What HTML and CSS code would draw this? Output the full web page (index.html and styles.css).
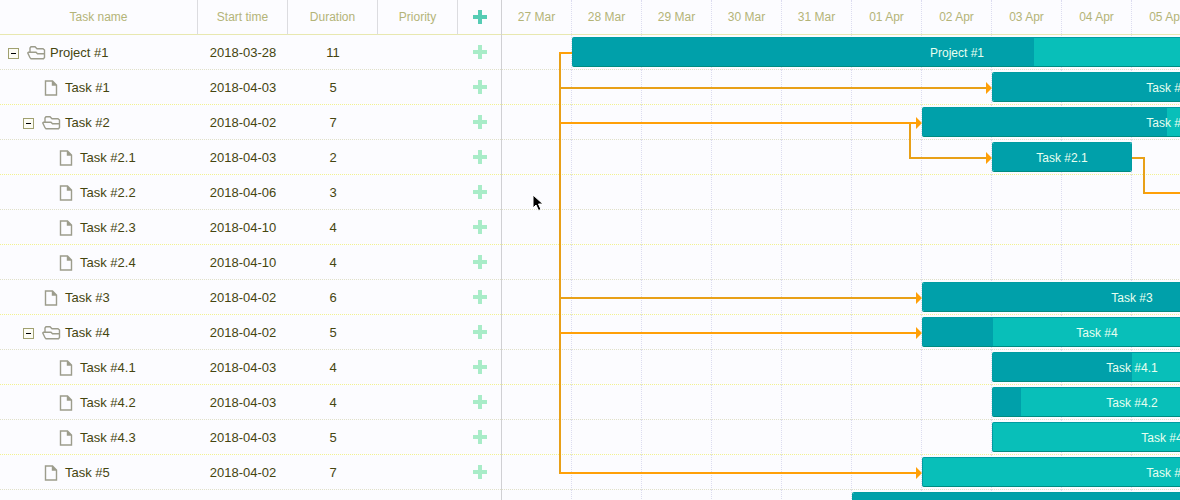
FILE: index.html
```html
<!DOCTYPE html>
<html lang="en">
<head>
<meta charset="utf-8">
<title>Project #1</title>
<link rel="stylesheet" href="styles.css">
</head>
<body>
<svg class="defs" aria-hidden="true">
  <symbol id="folder" viewBox="0 0 19 14"><path d="M3 6V2L4 .7H8L10 2.700H16L17.500 4V11.500L16.500 12.700H4L3 11.700L.8 7L1.500 6.200H9L10.500 7.700H17"/></symbol>
  <symbol id="file" viewBox="0 0 14 16"><path d="M1.500 1H8.500L12.500 5V15H1.500ZM8.500 1V5H12.500M9.500 2V4H11.500"/></symbol>
  <symbol id="plus" viewBox="0 0 14 14"><path d="M5 0h4v5h5v4H9v5H5V9H0V5h5z"/></symbol>
</svg>
<main class="gantt">
  <section class="pane">
    <table class="tasks">
      <colgroup><col class="c-name"><col class="c-date"><col class="c-date"><col class="c-priority"><col class="c-add"></colgroup>
      <thead><tr>
        <th>Task name</th><th>Start time</th><th>Duration</th><th>Priority</th>
        <th><button class="add" aria-label="Add task"><svg><use href="#plus"/></svg></button></th>
      </tr></thead>
      <tbody id="tasks"></tbody>
    </table>
  </section>
  <section class="chart">
    <div class="scale" id="scale"></div>
    <div class="canvas">
      <div id="rows"></div>
      <svg class="links" aria-hidden="true">
        <path class="dim" d="M58 17V439"/>
        <path d="M57 18H70M58 88H415M58 298H415M58 438H415M642 158H1000"/>
        <path class="dim" d="M59 53H485M59 263H415M408 89V123H485M630 123H642V159"/>
        <path class="head" d="M484 47l6 6-6 6zM414 82l6 6-6 6zM484 117l6 6-6 6zM414 257l6 6-6 6zM414 292l6 6-6 6zM414 432l6 6-6 6z"/>
      </svg>
    </div>
  </section>
</main>
<svg class="pointer" viewBox="0 0 12 18" aria-hidden="true"><path d="M1 1V14L4 11L6.500 16.500L9 15.500L6.500 10H11Z"/></svg>
<script src="app.js"></script>
</body>
</html>
```
FILE: styles.css
```css
:root {
  --row: 35px;
  --day: 70px;
  --lavender: #dcdcf0;
  --yellow: #f2f290;
}
* { box-sizing: border-box; }
body {
  margin: 0;
  height: 100vh;
  overflow: hidden;
  background: #fcfcff;
  color: #454510;
  font: 13px/20px "Liberation Sans", Arial, sans-serif;
}
.defs { display: none; }
.gantt { display: flex; min-height: 100%; }
.pane { flex: none; border-right: 1px solid #d0d0d4; }
.tasks { width: 501px; table-layout: fixed; border-collapse: separate; border-spacing: 0; }
.c-name { width: 198px; }
.c-date { width: 90px; }
.c-priority { width: 80px; }
.tasks th, .tasks td { height: var(--row); padding: 0; text-align: center; vertical-align: middle; }
.tasks td { padding-top: 1px; }
.tasks td:last-child { padding: 0 0 1px; }
.tasks th {
  border-bottom: 1px solid #e8e8b0;
  border-right: 1px solid #dcdce0;
  color: #b4b478;
  font-size: 12px;
  font-weight: normal;
}
.tasks th:last-child { border-right: 0; }
.tasks tbody tr, .row {
  --line: #e0e0c8;
  background: repeating-linear-gradient(to right, var(--line) 0 1px, transparent 1px 2px) bottom / 100% 1px no-repeat;
}
.tasks tbody tr:nth-child(even), .row:nth-child(even) { --line: var(--yellow); }
.name { display: flex; align-items: center; padding-left: 8px; }
.indent { width: 15px; }
.toggle {
  position: relative;
  width: 11px;
  height: 11px;
  margin-right: 8px;
  padding: 0;
  border: 1px solid #a0a070;
  background: #fcfcf4;
}
.toggle::after { content: ""; position: absolute; left: 2px; top: 4px; width: 5px; height: 1px; background: #000; }
.spacer { width: 15px; }
.name svg { fill: none; stroke: #9c9c8c; stroke-width: 1.400; }
.folder { width: 19px; height: 14px; margin-right: 4px; }
.file { width: 14px; height: 16px; margin: 0 7px 0 6px; }
.add { display: block; width: 14px; height: 14px; margin: 0 auto; padding: 0; border: 0; background: none; }
.add svg { display: block; width: 14px; height: 14px; fill: #56ccb4; }
td .add svg { fill: #a8ecc8; }
.chart { flex: 1; min-width: 0; overflow: hidden; }
.scale, .row { display: grid; grid-template-columns: repeat(17, var(--day)); height: var(--row); width: max-content; }
.scale { border-bottom: 1px solid #e8e8b0; color: #b4b478; font-size: 12px; }
.day { display: flex; align-items: center; justify-content: center; border-right: 1px dotted var(--lavender); }
.canvas { position: relative; }
.cell { grid-row: 1; border-right: 1px dotted var(--lavender); }
.bar {
  z-index: 1;
  display: grid;
  grid-row: 1;
  height: 30px;
  margin-top: 2px;
  border: 1px solid #009ca2;
  border-bottom-color: #008c80;
  border-radius: 2px;
  background: #08bfb9;
  color: #e8fff0;
  font-size: 12px;
  overflow: hidden;
}
.progress { grid-area: 1 / 1; background: #00a0aa; }
.label { grid-area: 1 / 1; place-self: center; padding-top: 1px; }
.links { position: absolute; inset: 0; width: 100%; height: 100%; fill: none; stroke: #ffa008; stroke-width: 2; }
.links .dim { stroke: #e8a018; }
.links .head { fill: #ffa008; stroke: none; }
.pointer { position: absolute; left: 532px; top: 194px; width: 12px; height: 18px; fill: #000; stroke: #fff; stroke-width: 1; }
```
FILE: app.js
```js
// Tasks: name, start date, duration, level, folder, bar column, bar days, progress %
const tasks = [
  ["Project #1", "2018-03-28", 11, 0, true, 2, 11, 60],
  ["Task #1", "2018-04-03", 5, 1, false, 8, 5, 100],
  ["Task #2", "2018-04-02", 7, 1, true, 7, 7, 50],
  ["Task #2.1", "2018-04-03", 2, 2, false, 8, 2, 100],
  ["Task #2.2", "2018-04-06", 3, 2, false],
  ["Task #2.3", "2018-04-10", 4, 2, false],
  ["Task #2.4", "2018-04-10", 4, 2, false],
  ["Task #3", "2018-04-02", 6, 1, false, 7, 6, 100],
  ["Task #4", "2018-04-02", 5, 1, true, 7, 5, 20],
  ["Task #4.1", "2018-04-03", 4, 2, false, 8, 4, 50],
  ["Task #4.2", "2018-04-03", 4, 2, false, 8, 4, 10],
  ["Task #4.3", "2018-04-03", 5, 2, false, 8, 5, 0],
  ["Task #5", "2018-04-02", 7, 1, false, 7, 7, 0],
  ["", "", "", 0, null, 6, 5, 100]
];
const days = ["27 Mar", "28 Mar", "29 Mar", "30 Mar", "31 Mar", "01 Apr", "02 Apr", "03 Apr", "04 Apr", "05 Apr"];

document.getElementById("scale").innerHTML = days.map(d => `<div class="day">${d}</div>`).join("");

document.getElementById("tasks").innerHTML = tasks.map(([name, start, duration, level, folder]) => {
  if (!name) return `<tr><td></td><td></td><td></td><td></td><td></td></tr>`;
  const indent = `<span class="indent"></span>`.repeat(level);
  const icon = folder
    ? `<button class="toggle" aria-label="Collapse ${name}"></button><svg class="folder"><use href="#folder"/></svg>`
    : `<span class="spacer"></span><svg class="file"><use href="#file"/></svg>`;
  return `<tr><td><div class="name">${indent}${icon}<span>${name}</span></div></td>
    <td>${start}</td><td>${duration}</td><td></td>
    <td><button class="add" aria-label="Add subtask to ${name}"><svg><use href="#plus"/></svg></button></td></tr>`;
}).join("");

document.getElementById("rows").innerHTML = tasks.map(([name, , , , , column, span, progress]) => {
  const cells = Array.from({ length: 17 }, (_, i) => `<div class="cell" style="grid-column:${i + 1}"></div>`).join("");
  const bar = column
    ? `<div class="bar" style="grid-column:${column} / span ${span}"><div class="progress" style="width:${progress}%"></div><span class="label">${name}</span></div>`
    : "";
  return `<div class="row">${cells}${bar}</div>`;
}).join("");
```
